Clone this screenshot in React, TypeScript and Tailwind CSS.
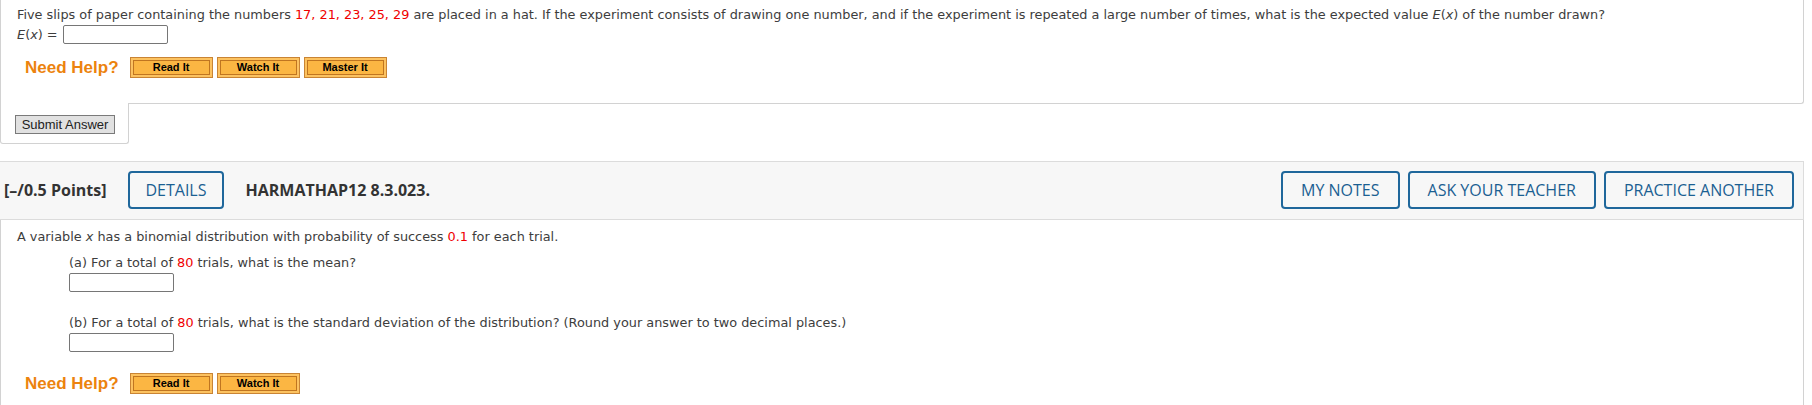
import React from "react";

const body = { fontFamily: 'Verdana, "DejaVu Sans", sans-serif' };
const arial = { fontFamily: '"Liberation Sans", Arial, sans-serif' };
const open = { fontFamily: '"Open Sans", "Noto Sans", sans-serif' };

function Red({ children }: { children: React.ReactNode }) {
    return <span className="text-[#f00000]">{children}</span>;
}

function AnswerBox() {
    return <input type="text" className="h-[19px] w-[105px] rounded-[2px] border border-[#767676] bg-white" />;
}

function HelpButton({ label }: { label: string }) {
    return (
        <button
            className="flex h-[21px] w-[83px] items-center justify-center border border-[#c98434] bg-[#fcc260] p-[2px]"
            style={arial}
        >
            <span className="flex h-full w-full items-center justify-center border border-[#c07520] bg-[#fbb643] text-[11px] font-bold leading-none text-black">
                {label}
            </span>
        </button>
    );
}

function NeedHelp({ buttons }: { buttons: string[] }) {
    return (
        <div className="flex items-center pl-[24px]">
            <span className="mr-[11px] text-[17px] font-bold leading-none text-[#ec830e]" style={arial}>
                Need Help?
            </span>
            <div className="flex gap-[4px]">
                {buttons.map((b) => (
                    <HelpButton key={b} label={b} />
                ))}
            </div>
        </div>
    );
}

function OutlineButton({ label, narrow }: { label: string; narrow?: boolean }) {
    return (
        <button
            className={
                "flex h-[38px] items-center rounded-[4px] border-2 border-[#1f679b] text-[16px] text-[#1b5f92] " +
                (narrow ? "px-[15px]" : "px-[18px]")
            }
            style={open}
        >
            {label}
        </button>
    );
}

export default function App() {
    return (
        <div className="min-h-[405px] w-[1812px] bg-white pr-[8px] text-[12.85px] text-[#3d3d3d]" style={body}>
            {/* previous question */}
            <div className="rounded-br-[3px] border-r border-b border-l border-[#d2d2d2] pt-[5px] pb-[25px]">
                <p className="pl-[16px] leading-[20px]">
                    Five slips of paper containing the numbers <Red>17, 21, 23, 25, 29</Red> are placed in a hat. If the
                    experiment consists of drawing one number, and if the experiment is repeated a large number of times,
                    what is the expected value <i>E</i>(<i>x</i>) of the number drawn?
                </p>
                <div className="flex h-[19px] items-center gap-[5px] pl-[16px]">
                    <span>
                        <i>E</i>(<i>x</i>) =
                    </span>
                    <AnswerBox />
                </div>
                <div className="mt-[13px]">
                    <NeedHelp buttons={["Read It", "Watch It", "Master It"]} />
                </div>
            </div>
            <div className="relative -mt-px w-[129px] rounded-b-[3px] border-r border-b border-l border-[#d2d2d2] bg-white pt-[12px] pb-[9px] pl-[14px]">
                <button
                    className="flex h-[19px] w-[100px] items-center justify-center border border-[#7a7a7a] bg-[#e1e1e1] text-[13px] text-[#222]"
                    style={arial}
                >
                    Submit Answer
                </button>
            </div>

            {/* next question */}
            <div className="mt-[17px]">
                <div className="flex items-center justify-between border-t border-r border-b border-[#dcdcdc] bg-[#f7f7f7] pt-[9px] pr-[9px] pb-[10px] pl-[4px]" style={open}>
                    <div className="flex items-center gap-[22px]">
                        <span className="text-[16px] font-bold text-[#333]">[–/0.5 Points]</span>
                        <OutlineButton label="DETAILS" narrow />
                        <span className="text-[16px] font-bold text-[#333]">HARMATHAP12 8.3.023.</span>
                    </div>
                    <div className="flex gap-[8px]">
                        <OutlineButton label="MY NOTES" />
                        <OutlineButton label="ASK YOUR TEACHER" />
                        <OutlineButton label="PRACTICE ANOTHER" />
                    </div>
                </div>
                <div className="h-[186px] border-r border-l border-[#d2d2d2] pt-[7px]">
                    <p className="pl-[16px] leading-[20px]">
                        A variable <i>x</i> has a binomial distribution with probability of success <Red>0.1</Red> for each trial.
                    </p>
                    <div className="mt-[6px] pl-[68px]">
                        <p className="leading-[20px]">
                            (a) For a total of <Red>80</Red> trials, what is the mean?
                        </p>
                        <AnswerBox />
                        <p className="mt-[21px] leading-[20px]">
                            (b) For a total of <Red>80</Red> trials, what is the standard deviation of the distribution? (Round
                            your answer to two decimal places.)
                        </p>
                        <AnswerBox />
                    </div>
                    <div className="mt-[20px]">
                        <NeedHelp buttons={["Read It", "Watch It"]} />
                    </div>
                </div>
            </div>
        </div>
    );
}
